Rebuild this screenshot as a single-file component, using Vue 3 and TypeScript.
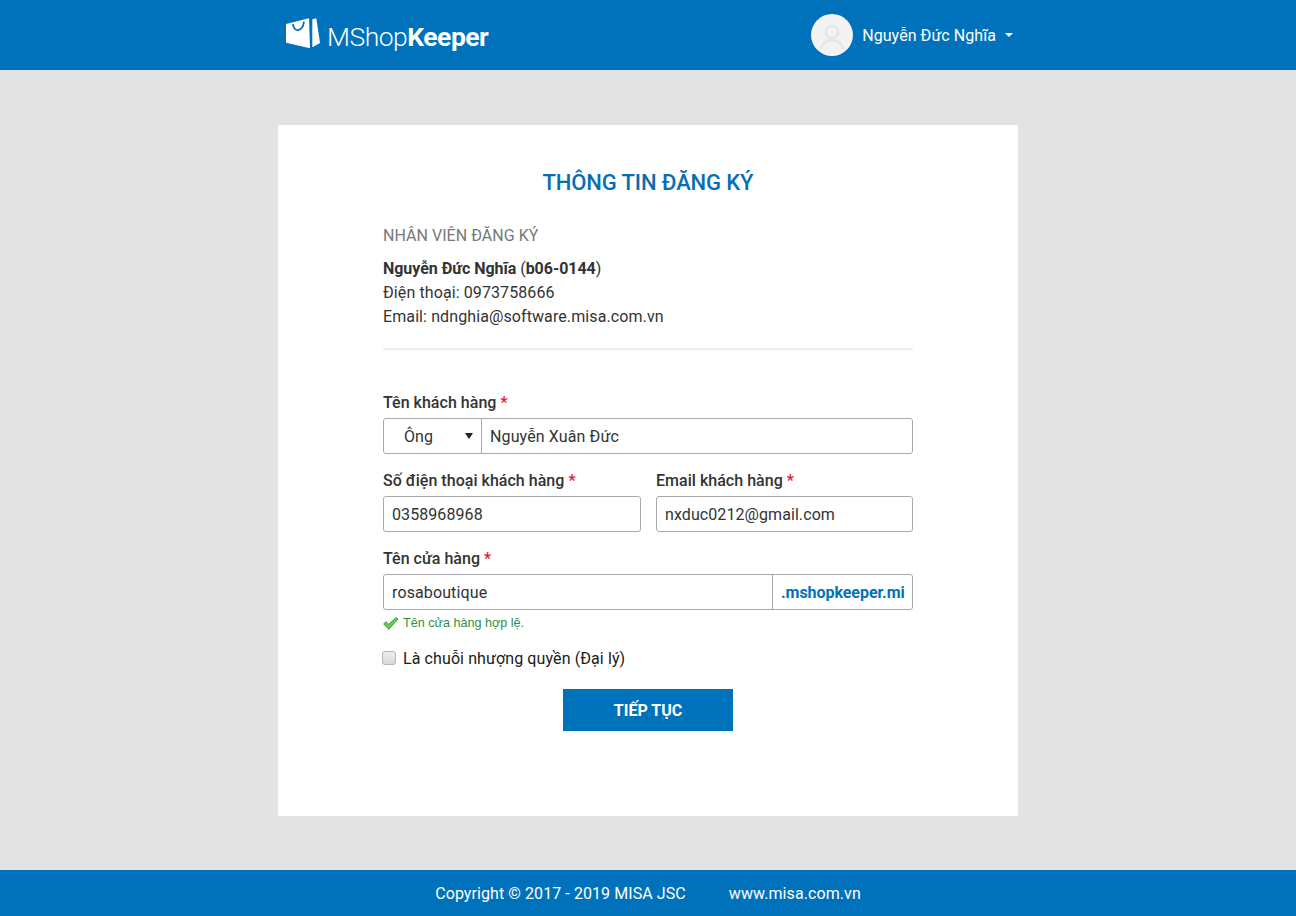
<script setup lang="ts">
const employee = { name: 'Nguyễn Đức Nghĩa', code: 'b06-0144', phone: '0973758666', email: 'ndnghia@software.misa.com.vn' }
</script>

<template>
  <div class="page">
    <header class="header">
      <div class="header-inner">
        <div class="logo">
          <svg class="logo-icon" width="36" height="32" viewBox="0 0 36 32">
            <path fill="#fff" d="M1 7 L24 1.3 L25 31.3 L1 25.7 Z" />
            <path fill="#fff" d="M27.3 2.3 L31.3 1.3 L35 26 L27.3 30.3 Z" />
            <path fill="none" stroke="#0072bc" stroke-width="1.8" d="M8 7 C8.5 15.5 17.5 15.5 19 4.7" />
          </svg>
          <span class="logo-text">MShop<b>Keeper</b></span>
        </div>
        <div class="user">
          <div class="avatar">
            <svg width="42" height="42" viewBox="0 0 42 42">
              <circle cx="21" cy="21" r="21" fill="#f3f3f3" />
              <circle cx="21" cy="18" r="6.2" fill="none" stroke="#e6e6e6" stroke-width="2.6" />
              <path fill="none" stroke="#e6e6e6" stroke-width="2.6" d="M10 35 C11 28 16 26.5 21 26.5 C26 26.5 31 28 32 35" />
            </svg>
          </div>
          <span class="user-name">{{ employee.name }}</span>
          <span class="caret"></span>
        </div>
      </div>
    </header>

    <main class="main">
      <section class="card">
        <h1 class="title">THÔNG TIN ĐĂNG KÝ</h1>
        <h2 class="section-label">NHÂN VIÊN ĐĂNG KÝ</h2>
        <div class="employee">
          <div class="employee-name"><b>{{ employee.name }}</b> (<b>{{ employee.code }}</b>)</div>
          <div>Điện thoại: {{ employee.phone }}</div>
          <div>Email: {{ employee.email }}</div>
        </div>
        <div class="divider"></div>

        <div class="field first">
          <label class="label">Tên khách hàng <i>*</i></label>
          <div class="control joined">
            <div class="salutation"><span>Ông</span><span class="select-arrow"></span></div>
            <input class="bare" value="Nguyễn Xuân Đức" />
          </div>
        </div>

        <div class="two">
          <div class="field">
            <label class="label">Số điện thoại khách hàng <i>*</i></label>
            <input class="control input" value="0358968968" />
          </div>
          <div class="field">
            <label class="label">Email khách hàng <i>*</i></label>
            <input class="control input" value="nxduc0212@gmail.com" />
          </div>
        </div>

        <div class="field">
          <label class="label">Tên cửa hàng <i>*</i></label>
          <div class="control joined">
            <input class="bare" value="rosaboutique" />
            <div class="suffix">.mshopkeeper.mi</div>
          </div>
          <div class="valid">
            <svg width="16" height="13" viewBox="0 0 16 13">
              <path fill="#6cc95a" stroke="#329a32" stroke-width="1" d="M0.7 7 L3 4.7 L5.7 7.3 L13 0.8 L15 2 L5.8 12.3 Z" />
            </svg>
            <span>Tên cửa hàng hợp lệ.</span>
          </div>
        </div>

        <label class="check">
          <span class="box"></span>
          <span>Là chuỗi nhượng quyền (Đại lý)</span>
        </label>

        <div class="actions">
          <button class="submit" type="button">TIẾP TỤC</button>
        </div>
      </section>
    </main>

    <footer class="footer">
      <span>Copyright © 2017 - 2019 MISA JSC</span>
      <span>www.misa.com.vn</span>
    </footer>
  </div>
</template>

<style>
html, body { margin: 0; padding: 0; }
</style>

<style scoped>
.page {
  height: 916px;
  display: flex;
  flex-direction: column;
  background: #e3e3e3;
  font-family: Roboto, "Liberation Sans", sans-serif;
  font-size: 16px;
  line-height: 24px;
  color: #333;
}
.header {
  height: 70px;
  flex: none;
  background: #0072bc;
}
.header-inner {
  width: 740px;
  height: 70px;
  margin: 0 auto;
  display: flex;
  align-items: center;
  justify-content: space-between;
  color: #fff;
}
.logo {
  display: flex;
  align-items: center;
  margin-left: 7px;
  gap: 6px;
}
.logo-icon { margin-top: -4px; }
.logo-text {
  font-size: 26.5px;
  font-weight: 300;
  line-height: 34px;
  letter-spacing: -0.5px;
  padding-top: 4px;
}
.logo-text b { font-weight: 700; }
.user {
  display: flex;
  align-items: center;
  margin-right: 5px;
}
.avatar {
  width: 42px;
  height: 42px;
  margin-right: 9px;
}
.avatar svg { display: block; }
.user-name {
  font-size: 16px;
  letter-spacing: 0.06px;
  padding-top: 1px;
}
.caret {
  margin-left: 9px;
  border-left: 4px solid transparent;
  border-right: 4px solid transparent;
  border-top: 4px solid #fff;
}
.main {
  flex: 1;
  padding-top: 55px;
}
.card {
  box-sizing: border-box;
  width: 740px;
  height: 691px;
  margin: 0 auto;
  padding: 44px 105px 0;
  background: #fff;
}
.title {
  margin: 0;
  font-size: 22px;
  line-height: 28px;
  font-weight: 500;
  letter-spacing: -0.12px;
  color: #076eb3;
  text-align: center;
}
.section-label {
  margin: 27px 0 0;
  font-size: 16px;
  line-height: 24px;
  font-weight: 400;
  color: #777;
  letter-spacing: 0.04px;
}
.employee {
  margin-top: 9px;
  letter-spacing: 0.1px;
}
.employee-name { letter-spacing: -0.04px; }
.employee b { font-weight: 700; }
.divider {
  height: 2px;
  margin-top: 19px;
  background: #eee;
}
.field { margin-top: 15px; min-width: 0; }
.field.first { margin-top: 41px; }
.label {
  display: block;
  height: 24px;
  margin-bottom: 3px;
  font-weight: 500;
  color: #333;
  letter-spacing: 0.03px;
}
.label i {
  font-style: normal;
  color: #e8112d;
}
.control {
  box-sizing: border-box;
  width: 100%;
  height: 36px;
  border: 1px solid #a9a9a9;
  border-radius: 3px;
  background: #fff;
  font: inherit;
  color: #333;
  letter-spacing: 0.08px;
}
.input {
  display: block;
  padding: 0 8px;
  outline: none;
}
.joined { display: flex; }
.salutation {
  flex: none;
  width: 98px;
  box-sizing: border-box;
  padding: 2px 8px 0 20px;
  border-right: 1px solid #a9a9a9;
  display: flex;
  align-items: center;
  justify-content: space-between;
  line-height: 32px;
}
.select-arrow {
  margin-top: -2px;
  border-left: 4.5px solid transparent;
  border-right: 4.5px solid transparent;
  border-top: 6px solid #222;
}
.bare {
  flex: 1;
  min-width: 0;
  box-sizing: border-box;
  height: 34px;
  padding: 0 8px;
  border: 0;
  outline: none;
  background: transparent;
  font: inherit;
  letter-spacing: 0.12px;
  color: #333;
}
.suffix {
  flex: none;
  box-sizing: border-box;
  width: 140px;
  padding-left: 8px;
  border-left: 1px solid #a9a9a9;
  font-weight: 700;
  color: #0072bc;
  line-height: 36px;
  letter-spacing: -0.05px;
  white-space: nowrap;
}
.two {
  display: grid;
  grid-template-columns: 258px 257px;
  column-gap: 15px;
}
.valid {
  display: flex;
  align-items: center;
  gap: 4px;
  height: 18px;
  margin-top: 4px;
  font-family: "Liberation Sans", Arial, sans-serif;
  font-size: 12.6px;
  line-height: 18px;
  color: #2f8f3f;
}
.check {
  display: flex;
  align-items: center;
  gap: 7px;
  height: 24px;
  margin-top: 15px;
  margin-left: -1px;
  color: #1a1a1a;
  letter-spacing: 0.1px;
}
.box {
  box-sizing: border-box;
  width: 14px;
  height: 14px;
  margin-top: -2px;
  border: 1px solid #b5b5b5;
  border-radius: 3px;
  background: linear-gradient(#eee, #d8d8d8);
}
.actions {
  display: flex;
  justify-content: center;
  margin-top: 18px;
}
.submit {
  width: 170px;
  height: 42px;
  border: 0;
  background: #0072bc;
  color: #fff;
  font-family: inherit;
  font-size: 16px;
  font-weight: 700;
}
.footer {
  height: 46px;
  flex: none;
  background: #0072bc;
  color: #fff;
  display: flex;
  align-items: center;
  justify-content: center;
  gap: 43px;
  letter-spacing: 0.08px;
  padding-top: 1px;
  box-sizing: border-box;
}
</style>
